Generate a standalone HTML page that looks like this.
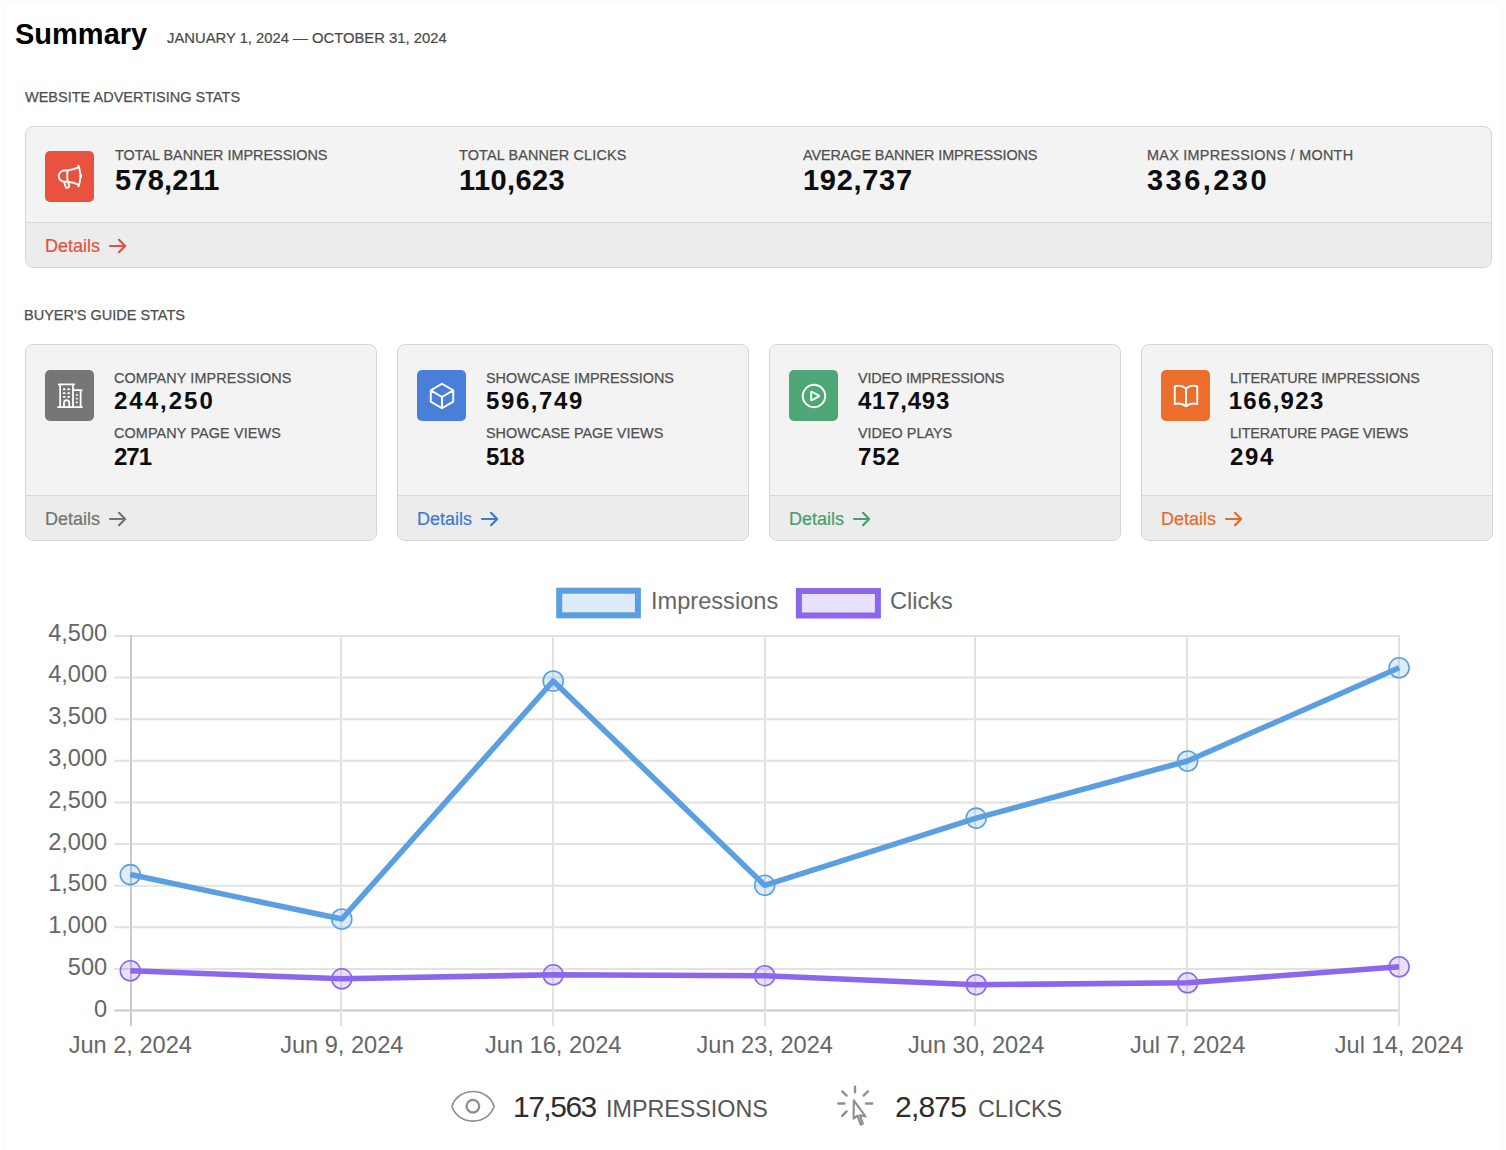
<!DOCTYPE html>
<html>
<head>
<meta charset="utf-8">
<style>
*{box-sizing:border-box;margin:0;padding:0}
html,body{width:1506px;height:1150px;overflow:hidden;background:#fdfdfd}
body{position:relative;font-family:"Liberation Sans",sans-serif;color:#111}
.abs{position:absolute;white-space:nowrap;line-height:1}
.title{left:15px;top:19.5px;font-size:29px;font-weight:700;color:#000;letter-spacing:0}
.date{left:167px;top:30.5px;font-size:14.8px;color:#4a4a4a;-webkit-text-stroke:0.2px #4a4a4a}
.sec{font-size:14.5px;color:#4f4f4f;-webkit-text-stroke:0.25px #4f4f4f}
.card{position:absolute;border:1px solid #d6d6d6;border-radius:8px;background:#f3f3f3;overflow:hidden}
.card .foot{position:absolute;left:0;right:0;bottom:0;height:45px;background:#ececec;border-top:1px solid #d9d9d9}
.icon{position:absolute;width:49px;height:51px;border-radius:5px}
.icon svg{position:absolute;left:0;top:0}
.lbl{position:absolute;white-space:nowrap;line-height:1;font-size:14.4px;color:#505050;-webkit-text-stroke:0.25px #505050}
.val{position:absolute;white-space:nowrap;line-height:1;font-weight:700;color:#0d0d0d}
.v1{font-size:29px}
.v2{font-size:24px}
.det{position:absolute;left:19px;top:13.5px;white-space:nowrap;line-height:1;font-size:18px;-webkit-text-stroke:0.2px currentColor}
.det svg{position:absolute;left:63px;top:0.5px}
.tot{font-size:30px;color:#2e2e2e;letter-spacing:-1.5px}
.tot2{letter-spacing:-0.8px}
.totl{font-size:23.3px;color:#555}
</style>
</head>
<body>
<div style="position:absolute;left:3px;top:3px;width:1499px;height:1200px;background:#fff;border:1px solid #f9f9f9;border-radius:6px"></div>
<div class="abs title">Summary</div>
<div class="abs date">JANUARY 1, 2024 — OCTOBER 31, 2024</div>
<div class="abs sec" style="left:25px;top:90px">WEBSITE ADVERTISING STATS</div>

<!-- Card 1 -->
<div class="card" style="left:25px;top:126px;width:1467px;height:142px">
  <div class="icon" style="left:19px;top:24px;background:#e8523f"><svg style="left:9.5px;top:10.5px" width="30" height="30" viewBox="0 0 24 24" fill="none" stroke="#fff" stroke-width="1.5" stroke-linecap="round" stroke-linejoin="round"><path d="M10.34 15.84c-.688-.06-1.386-.09-2.09-.09H7.5a4.5 4.5 0 1 1 0-9h.75c.704 0 1.402-.03 2.09-.09m0 9.18c.253.962.584 1.892.985 2.783.247.55.06 1.21-.463 1.511l-.657.38c-.551.318-1.26.117-1.527-.461a20.845 20.845 0 0 1-1.44-4.282m3.102.069a18.03 18.03 0 0 1-.59-4.59c0-1.586.205-3.124.59-4.59m0 9.18a23.848 23.848 0 0 1 8.835 2.535M10.34 6.66a23.847 23.847 0 0 0 8.835-2.535m0 0A23.74 23.74 0 0 0 18.795 3m.38 1.125a23.91 23.91 0 0 1 1.014 5.395m-1.014 8.855c-.118.38-.245.754-.38 1.125m.38-1.125a23.91 23.91 0 0 0 1.014-5.395m0-3.46c.495.413.811 1.035.811 1.73 0 .695-.316 1.317-.811 1.73m0-3.46a24.347 24.347 0 0 1 0 3.46"/></svg></div>
  <div class="lbl" style="left:89px;top:21px">TOTAL BANNER IMPRESSIONS</div>
  <div class="val v1" style="left:89px;top:39px;letter-spacing:0.2px">578,211</div>
  <div class="lbl" style="left:433px;top:21px;letter-spacing:0.16px">TOTAL BANNER CLICKS</div>
  <div class="val v1" style="left:433px;top:39px;letter-spacing:0.4px">110,623</div>
  <div class="lbl" style="left:777px;top:21px;letter-spacing:-0.08px">AVERAGE BANNER IMPRESSIONS</div>
  <div class="val v1" style="left:777px;top:39px;letter-spacing:0.7px">192,737</div>
  <div class="lbl" style="left:1121px;top:21px;letter-spacing:0.28px">MAX IMPRESSIONS / MONTH</div>
  <div class="val v1" style="left:1121px;top:39px;letter-spacing:2.45px">336,230</div>
  <div class="foot">
    <div class="det" style="color:#e0533f">Details<svg width="20" height="18" viewBox="0 0 20 18" fill="none" stroke="#e0533f" stroke-width="2.2" stroke-linecap="round" stroke-linejoin="round"><path d="M2 9 H17.2 M11 2.8 L17.2 9 L11 15.2"/></svg></div>
  </div>
</div>

<div class="abs sec" style="left:24px;top:308px">BUYER'S GUIDE STATS</div>

<!-- Card 2: Company -->
<div class="card" style="left:25px;top:344px;width:352px;height:197px">
  <div class="icon" style="left:19px;top:25px;background:#767676"><svg style="left:9.5px;top:10.5px" width="30" height="30" viewBox="0 0 24 24" fill="none" stroke="#fff" stroke-width="1.4" stroke-linecap="round" stroke-linejoin="round"><path d="M2.4 20.8H21.6M3 2.7H15.4M4.1 2.7V20.8M14.4 2.7V20.8M14.4 7.3H21.4M20.5 7.3V20.8M7.2 20.8V17.3A2.1 2.1 0 0 1 11.4 17.3V20.8"/><path stroke-width="1.5" d="M7 6.6h.7M10.6 6.6h.7M7 9.7h.7M10.6 9.7h.7M7 12.7h.7M10.6 12.7h.7M17.4 11.1h.1M17.4 14.1h.1M17.4 17.1h.1"/></svg></div>
  <div class="lbl" style="left:88px;top:26px;letter-spacing:0.11px">COMPANY IMPRESSIONS</div>
  <div class="val v2" style="left:88px;top:44px;letter-spacing:2.0px">244,250</div>
  <div class="lbl" style="left:88px;top:80.5px;letter-spacing:0.12px">COMPANY PAGE VIEWS</div>
  <div class="val v2" style="left:88px;top:100px;letter-spacing:-1.0px">271</div>
  <div class="foot"><div class="det" style="color:#747474">Details<svg width="20" height="18" viewBox="0 0 20 18" fill="none" stroke="#747474" stroke-width="2.2" stroke-linecap="round" stroke-linejoin="round"><path d="M2 9 H17.2 M11 2.8 L17.2 9 L11 15.2"/></svg></div></div>
</div>

<!-- Card 3: Showcase -->
<div class="card" style="left:397px;top:344px;width:352px;height:197px">
  <div class="icon" style="left:19px;top:25px;background:#4a7fd9"><svg style="left:9.5px;top:10.5px" width="30" height="30" viewBox="0 0 24 24" fill="none" stroke="#fff" stroke-width="1.5" stroke-linecap="round" stroke-linejoin="round"><path d="m21 7.5-9-5.25L3 7.5m18 0-9 5.25m9-5.25v9l-9 5.25M3 7.5l9 5.25M3 7.5v9l9 5.25m0-9v9"/></svg></div>
  <div class="lbl" style="left:88px;top:26px">SHOWCASE IMPRESSIONS</div>
  <div class="val v2" style="left:88px;top:44px;letter-spacing:1.6px">596,749</div>
  <div class="lbl" style="left:88px;top:80.5px">SHOWCASE PAGE VIEWS</div>
  <div class="val v2" style="left:88px;top:100px;letter-spacing:-0.7px">518</div>
  <div class="foot"><div class="det" style="color:#3f79d6">Details<svg width="20" height="18" viewBox="0 0 20 18" fill="none" stroke="#3f79d6" stroke-width="2.2" stroke-linecap="round" stroke-linejoin="round"><path d="M2 9 H17.2 M11 2.8 L17.2 9 L11 15.2"/></svg></div></div>
</div>

<!-- Card 4: Video -->
<div class="card" style="left:769px;top:344px;width:352px;height:197px">
  <div class="icon" style="left:19px;top:25px;background:#4fa677"><svg style="left:9.5px;top:10.5px" width="30" height="30" viewBox="0 0 24 24" fill="none" stroke="#fff" stroke-width="1.5" stroke-linecap="round" stroke-linejoin="round"><path d="M21 12a9 9 0 1 1-18 0 9 9 0 0 1 18 0Z"/><path d="M15.91 11.672a.375.375 0 0 1 0 .656l-5.603 3.113a.375.375 0 0 1-.557-.328V8.887c0-.286.307-.466.557-.327l5.603 3.112Z"/></svg></div>
  <div class="lbl" style="left:88px;top:26px;letter-spacing:-0.15px">VIDEO IMPRESSIONS</div>
  <div class="val v2" style="left:88px;top:44px;letter-spacing:0.75px">417,493</div>
  <div class="lbl" style="left:88px;top:80.5px">VIDEO PLAYS</div>
  <div class="val v2" style="left:88px;top:100px;letter-spacing:0.8px">752</div>
  <div class="foot"><div class="det" style="color:#46a06e">Details<svg width="20" height="18" viewBox="0 0 20 18" fill="none" stroke="#46a06e" stroke-width="2.2" stroke-linecap="round" stroke-linejoin="round"><path d="M2 9 H17.2 M11 2.8 L17.2 9 L11 15.2"/></svg></div></div>
</div>

<!-- Card 5: Literature -->
<div class="card" style="left:1141px;top:344px;width:352px;height:197px">
  <div class="icon" style="left:19px;top:25px;background:#ec6e2c"><svg style="left:9.5px;top:10.5px" width="30" height="30" viewBox="0 0 24 24" fill="none" stroke="#fff" stroke-width="1.5" stroke-linecap="round" stroke-linejoin="round"><path d="M12 6.042A8.967 8.967 0 0 0 6 3.75c-1.052 0-2.062.18-3 .512v14.25A8.987 8.987 0 0 1 6 18c2.305 0 4.408.867 6 2.292m0-14.25a8.966 8.966 0 0 1 6-2.292c1.052 0 2.062.18 3 .512v14.25A8.987 8.987 0 0 0 18 18a8.967 8.967 0 0 0-6 2.292m0-14.25v14.25"/></svg></div>
  <div class="lbl" style="left:88px;top:26px;letter-spacing:-0.12px">LITERATURE IMPRESSIONS</div>
  <div class="val v2" style="left:86.7px;top:44px;letter-spacing:1.3px">166,923</div>
  <div class="lbl" style="left:88px;top:80.5px;letter-spacing:-0.17px">LITERATURE PAGE VIEWS</div>
  <div class="val v2" style="left:88px;top:100px;letter-spacing:1.6px">294</div>
  <div class="foot"><div class="det" style="color:#e56b2c">Details<svg width="20" height="18" viewBox="0 0 20 18" fill="none" stroke="#e56b2c" stroke-width="2.2" stroke-linecap="round" stroke-linejoin="round"><path d="M2 9 H17.2 M11 2.8 L17.2 9 L11 15.2"/></svg></div></div>
</div>

<!-- CHART -->
<svg id="chart" style="position:absolute;left:0;top:0" width="1506" height="1150" viewBox="0 0 1506 1150">
<g font-family="Liberation Sans, sans-serif" font-size="23.6" fill="#666">
<line x1="114" y1="1010.5" x2="1400.1" y2="1010.5" stroke="#cbcbcb" stroke-width="2"/>
<line x1="114" y1="968.9" x2="1400.1" y2="968.9" stroke="#e2e2e2" stroke-width="2"/>
<line x1="114" y1="927.3" x2="1400.1" y2="927.3" stroke="#e2e2e2" stroke-width="2"/>
<line x1="114" y1="885.7" x2="1400.1" y2="885.7" stroke="#e2e2e2" stroke-width="2"/>
<line x1="114" y1="844.1" x2="1400.1" y2="844.1" stroke="#e2e2e2" stroke-width="2"/>
<line x1="114" y1="802.4" x2="1400.1" y2="802.4" stroke="#e2e2e2" stroke-width="2"/>
<line x1="114" y1="760.8" x2="1400.1" y2="760.8" stroke="#e2e2e2" stroke-width="2"/>
<line x1="114" y1="719.2" x2="1400.1" y2="719.2" stroke="#e2e2e2" stroke-width="2"/>
<line x1="114" y1="677.6" x2="1400.1" y2="677.6" stroke="#e2e2e2" stroke-width="2"/>
<line x1="114" y1="636.0" x2="1400.1" y2="636.0" stroke="#e2e2e2" stroke-width="2"/>
<line x1="131.0" y1="635.0" x2="131.0" y2="1026" stroke="#cbcbcb" stroke-width="2"/>
<line x1="341.0" y1="635.0" x2="341.0" y2="1026" stroke="#e2e2e2" stroke-width="2"/>
<line x1="553.0" y1="635.0" x2="553.0" y2="1026" stroke="#e2e2e2" stroke-width="2"/>
<line x1="765.0" y1="635.0" x2="765.0" y2="1026" stroke="#e2e2e2" stroke-width="2"/>
<line x1="975.0" y1="635.0" x2="975.0" y2="1026" stroke="#e2e2e2" stroke-width="2"/>
<line x1="1187.0" y1="635.0" x2="1187.0" y2="1026" stroke="#e2e2e2" stroke-width="2"/>
<line x1="1399.0" y1="635.0" x2="1399.0" y2="1026" stroke="#e2e2e2" stroke-width="2"/>
<text x="107.2" y="1016.7" text-anchor="end">0</text>
<text x="107.2" y="974.9" text-anchor="end">500</text>
<text x="107.2" y="933.1" text-anchor="end">1,000</text>
<text x="107.2" y="891.3" text-anchor="end">1,500</text>
<text x="107.2" y="849.5" text-anchor="end">2,000</text>
<text x="107.2" y="807.7" text-anchor="end">2,500</text>
<text x="107.2" y="765.9" text-anchor="end">3,000</text>
<text x="107.2" y="724.1" text-anchor="end">3,500</text>
<text x="107.2" y="682.3" text-anchor="end">4,000</text>
<text x="107.2" y="640.5" text-anchor="end">4,500</text>
<text x="130.3" y="1052.6" text-anchor="middle">Jun 2, 2024</text>
<text x="341.8" y="1052.6" text-anchor="middle">Jun 9, 2024</text>
<text x="553.2" y="1052.6" text-anchor="middle">Jun 16, 2024</text>
<text x="764.7" y="1052.6" text-anchor="middle">Jun 23, 2024</text>
<text x="976.2" y="1052.6" text-anchor="middle">Jun 30, 2024</text>
<text x="1187.6" y="1052.6" text-anchor="middle">Jul 7, 2024</text>
<text x="1399.1" y="1052.6" text-anchor="middle">Jul 14, 2024</text>
<circle cx="130.3" cy="874.6" r="10" fill="rgba(90,159,225,0.2)" stroke="#5a9fe1" stroke-width="1.6"/>
<circle cx="341.8" cy="919.0" r="10" fill="rgba(90,159,225,0.2)" stroke="#5a9fe1" stroke-width="1.6"/>
<circle cx="553.2" cy="681.0" r="10" fill="rgba(90,159,225,0.2)" stroke="#5a9fe1" stroke-width="1.6"/>
<circle cx="764.7" cy="885.3" r="10" fill="rgba(90,159,225,0.2)" stroke="#5a9fe1" stroke-width="1.6"/>
<circle cx="976.2" cy="818.1" r="10" fill="rgba(90,159,225,0.2)" stroke="#5a9fe1" stroke-width="1.6"/>
<circle cx="1187.6" cy="761.0" r="10" fill="rgba(90,159,225,0.2)" stroke="#5a9fe1" stroke-width="1.6"/>
<circle cx="1399.1" cy="667.8" r="10" fill="rgba(90,159,225,0.2)" stroke="#5a9fe1" stroke-width="1.6"/>
<polyline points="130.3,874.6 341.8,919.0 553.2,681.0 764.7,885.3 976.2,818.1 1187.6,761.0 1399.1,667.8" fill="none" stroke="#5a9fe1" stroke-width="5.6" stroke-linejoin="round"/>
<circle cx="130.3" cy="970.8" r="10" fill="rgba(140,103,237,0.2)" stroke="#8c67ed" stroke-width="1.6"/>
<circle cx="341.8" cy="978.8" r="10" fill="rgba(140,103,237,0.2)" stroke="#8c67ed" stroke-width="1.6"/>
<circle cx="553.2" cy="974.8" r="10" fill="rgba(140,103,237,0.2)" stroke="#8c67ed" stroke-width="1.6"/>
<circle cx="764.7" cy="975.7" r="10" fill="rgba(140,103,237,0.2)" stroke="#8c67ed" stroke-width="1.6"/>
<circle cx="976.2" cy="984.7" r="10" fill="rgba(140,103,237,0.2)" stroke="#8c67ed" stroke-width="1.6"/>
<circle cx="1187.6" cy="982.8" r="10" fill="rgba(140,103,237,0.2)" stroke="#8c67ed" stroke-width="1.6"/>
<circle cx="1399.1" cy="966.8" r="10" fill="rgba(140,103,237,0.2)" stroke="#8c67ed" stroke-width="1.6"/>
<polyline points="130.3,970.8 341.8,978.8 553.2,974.8 764.7,975.7 976.2,984.7 1187.6,982.8 1399.1,966.8" fill="none" stroke="#8c67ed" stroke-width="5.6" stroke-linejoin="round"/>
<rect x="559.2" y="590.7" width="78.7" height="24.6" fill="rgba(90,159,225,0.2)" stroke="#5a9fe1" stroke-width="6"/>
<text x="651" y="609">Impressions</text>
<rect x="798.9" y="591" width="79" height="24.5" fill="rgba(140,103,237,0.2)" stroke="#8c67ed" stroke-width="6"/>
<text x="890" y="609">Clicks</text>
</g>
</svg>


<!-- Totals -->
<svg class="abs" style="left:0;top:0;position:absolute" width="1506" height="1150" viewBox="0 0 1506 1150" fill="none" stroke="#8f8f8f" stroke-linecap="round" stroke-linejoin="round">
  <path stroke-width="1.6" d="M451.9 1106.3C455 1096.5 464 1091.5 473 1091.5C482 1091.5 491 1096.5 494.1 1106.3C491 1116.1 482 1121.1 473 1121.1C464 1121.1 455 1116.1 451.9 1106.3Z"/>
  <circle stroke-width="2.3" cx="472.9" cy="1106.2" r="6.3"/>
  <path stroke-width="2.4" d="M855 1086.8V1092.2M842.2 1091.4L846.6 1095.6M867.9 1091.4L863.6 1095.6M838.4 1103.5H844.4M866 1103.5H872.2M842.2 1115.8L846.6 1111.4"/>
  <path stroke-width="2.1" d="M853.8 1100.4L853.6 1118.8L857.4 1115.6L860.7 1124.6L862.9 1123.8L859.8 1115.2L865.6 1116.6Z"/>
</svg>
<div class="abs tot" style="left:513px;top:1092px">17,563</div>
<div class="abs totl" style="left:606px;top:1098px">IMPRESSIONS</div>
<div class="abs tot tot2" style="left:895px;top:1092px">2,875</div>
<div class="abs totl" style="left:978px;top:1098px">CLICKS</div>
</body>
</html>
